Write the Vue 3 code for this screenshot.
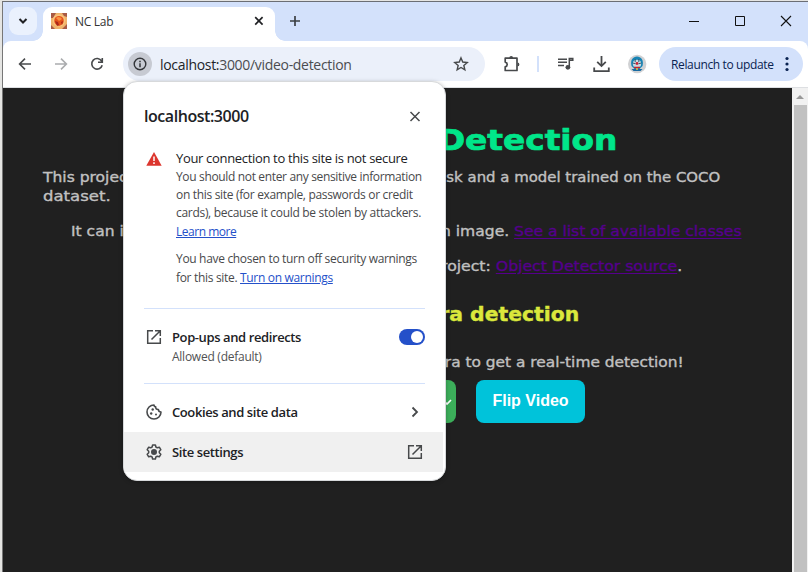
<script setup>
const menuRows = [
  { label: 'Cookies and site data', icon: 'cookie', trail: 'chevron' },
  { label: 'Site settings', icon: 'gear', trail: 'open', hovered: true },
]
</script>

<template>
  <div class="desktop">
    <div class="window">
      <header class="tabs">
        <button class="tab-search"><svg width="28" height="28" viewBox="0 0 28 28"><path d="m10.5 12 3.5 3.5 3.5-3.5" fill="none" stroke="#202124" stroke-width="2" /></svg></button>
        <div class="tab">
          <svg class="favicon" width="16" height="16" viewBox="0 0 16 16">
            <rect width="16" height="16" fill="#efb36c" />
            <path d="M0 0h5L2 5H0zM11 0h5v4l-3-1zM0 12l4 4H0zM16 11v5h-5z" fill="#a85a45" />
            <circle cx="8" cy="7.5" r="6.2" fill="#f9c47c" />
            <path d="M3.500 6c1-4 8-4 9 0 1 4-1.500 6-4.500 7-3-1-5.500-3-4.500-7z" fill="#e4521c" />
            <path d="M5 5c2-2 5-1 6 1L8 8z" fill="#fa9341" />
            <path d="M4 8l3 1 1 3-2 1zM10 9l2-1-1 4z" fill="#a8271b" />
          </svg>
          <span class="tab-title">NC Lab</span>
          <svg class="tab-close" width="10" height="10" viewBox="0 0 10 10"><path d="m1.2 1.2 7.4 7.4m0-7.4L1.2 8.6" stroke="#202124" stroke-width="1.7" /></svg>
        </div>
        <svg class="new-tab" width="12" height="12" viewBox="0 0 12 12"><path d="M6 1v10M1 6h10" stroke="#3c4043" stroke-width="1.7" /></svg>
        <div class="controls">
          <svg width="12" height="12" viewBox="0 0 12 12"><path d="M1 6.5h10" stroke="#111" /></svg>
          <svg width="12" height="12" viewBox="0 0 12 12"><path d="M1.5 1.5h9v9h-9z" fill="none" stroke="#111" /></svg>
          <svg width="12" height="12" viewBox="0 0 12 12"><path d="m1 1 10 10M11 1 1 11" stroke="#111" stroke-width="1.1" /></svg>
        </div>
      </header>

      <nav class="toolbar">
        <div class="nav-icons">
          <svg width="16" height="16" viewBox="0 0 16 16"><path d="M14 8H3M8 2.6 2.6 8 8 13.4" fill="none" stroke="#47494b" stroke-width="1.6" /></svg>
          <svg width="16" height="16" viewBox="0 0 16 16"><path d="M2 8h11M8 2.6 13.4 8 8 13.4" fill="none" stroke="#aaacae" stroke-width="1.6" /></svg>
          <svg width="16" height="16" viewBox="0 0 16 16"><path d="M12.6 5A5.3 5.3 0 1 0 13.2 9.2M13.3 2v4.2H9" fill="none" stroke="#47494b" stroke-width="1.6" /></svg>
        </div>
        <div class="omnibox">
          <span class="info"><svg width="16" height="16" viewBox="0 0 16 16"><circle cx="8" cy="8" r="5.8" fill="none" stroke="#333539" stroke-width="1.4" /><path d="M8 7.3v4M8 4.7v1.5" stroke="#333539" stroke-width="1.5" /></svg></span>
          <span class="url"><b>localhost:</b>3000/video-detection</span>
          <svg class="star" width="16" height="16" viewBox="0 0 16 16"><path d="m8 1.9 1.75 4.15 4.5.4-3.4 2.95 1 4.4L8 11.5l-3.85 2.3 1-4.4-3.4-2.95 4.5-.4z" fill="none" stroke="#47494b" stroke-width="1.4" /></svg>
        </div>
        <div class="actions">
          <svg width="18" height="18" viewBox="0 0 18 18"><path d="M2.200 3.200H14v12.300H2.200v-3.800q2-.5 2-2.300t-2-2.300z" fill="none" stroke="#47494b" stroke-width="1.700" stroke-linejoin="round" /><path d="M6.300 3a1.900 1.900 0 0 1 3.800 0zM14.500 7.500a1.900 1.900 0 0 1 0 3.800z" fill="#47494b" /></svg>
          <i class="separator"></i>
          <svg width="18" height="16" viewBox="0 0 18 16"><path d="M1 3.200h9M1 6.300h9M1 9.400h6" stroke="#47494b" stroke-width="1.500" /><path d="M12.300 11.300V2.500h3.500v1.800H13" fill="none" stroke="#47494b" stroke-width="1.500" /><circle cx="10.900" cy="11.300" r="2.400" fill="#47494b" /></svg>
          <svg width="18" height="18" viewBox="0 0 18 18"><path d="M8.500 1v10M4.200 6.800l4.300 4.300 4.300-4.300M1.200 12.500v3.600h14.600v-3.600" fill="none" stroke="#47494b" stroke-width="1.800" /></svg>
          <svg width="20" height="20" viewBox="0 0 20 20">
            <circle cx="9.200" cy="10" r="9.200" fill="#d0d1d3" />
            <path d="M3.500 12C2 6 5 2.500 9 2.500S16 6 14.500 12l-3 3h-5z" fill="#1784b5" />
            <ellipse cx="9" cy="9.800" rx="4.200" ry="4" fill="#c9d9e1" />
            <path d="M7.200 5v3M10.800 5v3M4.500 9l3 .7M13.500 9l-3 .7" stroke="#315f76" />
            <circle cx="9" cy="9.500" r="1.400" fill="#ca2437" />
            <path d="M6 13.500h6" stroke="#c32433" stroke-width="1.500" /><path d="M3.500 15h11l-2 2h-7z" fill="#176aa1" />
            <circle cx="9" cy="15" r="1" fill="#f0bd38" />
          </svg>
        </div>
        <button class="relaunch"><span>Relaunch to update</span><svg width="4" height="16" viewBox="0 0 4 16"><g fill="#0a2351"><circle cx="2" cy="2.500" r="1.600" /><circle cx="2" cy="8" r="1.600" /><circle cx="2" cy="13.500" r="1.600" /></g></svg></button>
      </nav>

      <div class="viewport">
        <main class="page">
          <h1><span>Detection</span></h1>
          <div class="line intro"><span>This project</span><span class="tail t1">task and a model trained on the COCO</span></div>
          <div class="line second"><span class="dataset">dataset.</span></div>
          <div class="line classes"><span>It can iden</span><span class="tail t2">in an image. <a>See a list of available classes</a></span></div>
          <div class="line source"><span class="tail t3">project: <a>Object Detector source</a>.</span></div>
          <h2><span>Camera detection</span></h2>
          <div class="line camera"><span class="tail t4">camera to get a real-time detection!</span></div>
          <div class="buttons">
            <button class="choose"><svg width="12" height="10" viewBox="0 0 12 10"><path d="m2 3 4 4 4-4" fill="none" stroke="#fff" stroke-width="1.700" /></svg></button>
            <button class="flip">Flip Video</button>
          </div>
        </main>
        <aside class="scrollbar"><i class="arrow"></i><i class="thumb"></i></aside>
      </div>
    </div>

    <section class="popup">
      <header class="popup-head">
        <strong>localhost:3000</strong>
        <svg width="12" height="12" viewBox="0 0 12 12"><path d="m1.500 1 9 9m0-9-9 9" stroke="#47494b" stroke-width="1.500" /></svg>
      </header>
      <div class="security">
        <svg class="warning" width="16" height="14" viewBox="0 0 16 14"><path d="M8 0 15.700 13.700H.3z" fill="#dc362e" /><path d="M8 4.500V9M8 10.200v1.700" stroke="#fff" stroke-width="1.500" /></svg>
        <div class="copy">
          <div class="secure-title">Your connection to this site is not secure</div>
          <div class="l1">You should not enter any sensitive information</div>
          <div class="l2">on this site (for example, passwords or credit</div>
          <div class="l3">cards), because it could be stolen by attackers.</div>
          <div class="more"><a>Learn more</a></div>
          <div class="l4">You have chosen to turn off security warnings</div>
          <div class="l5">for this site. <a>Turn on warnings</a></div>
        </div>
      </div>
      <div class="permission">
        <svg width="16" height="16" viewBox="0 0 16 16"><path d="M7 1.700H1.700v12.600h12.600V9M9 1.700h5.300V7M14.300 1.700 5.500 10.500" fill="none" stroke="#47494b" stroke-width="1.500" /></svg>
        <div class="permission-text"><strong>Pop-ups and redirects</strong><span>Allowed (default)</span></div>
        <i class="toggle"></i>
      </div>
      <div class="menu">
        <div v-for="row in menuRows" :key="row.label" class="menu-row" :class="{ hovered: row.hovered }">
          <svg v-if="row.icon === 'cookie'" width="16" height="16" viewBox="0 0 16 16"><path d="M8 1A7 7 0 1 0 15 8Q12.500 8 12.400 5.500 9.500 5.700 9.700 2.900 8 2.800 8 1z" fill="none" stroke="#47494b" stroke-width="1.600" stroke-linejoin="round" /><g fill="#47494b"><circle cx="6.700" cy="5.500" r="1.200" /><circle cx="5.200" cy="9.500" r="1.200" /><circle cx="10" cy="10.500" r="1" /></g></svg>
          <svg v-else width="16" height="16" viewBox="0 0 16 16"><path d="M6.600 1h2.800l.5 2 1.400.8 2-.6 1.500 2.500L13.300 7.200v1.600l1.500 1.500-1.500 2.500-2-.6-1.400.8-.5 2H6.600l-.5-2-1.400-.8-2 .6-1.500-2.500 1.500-1.500V7.200L1.200 5.700l1.500-2.500 2 .6 1.400-.8z" fill="none" stroke="#47494b" stroke-width="1.500" stroke-linejoin="round" /><circle cx="8" cy="8" r="3" fill="#47494b" /></svg>
          <strong :class="row.icon">{{ row.label }}</strong>
          <svg v-if="row.trail === 'chevron'" width="16" height="16" viewBox="0 0 16 16"><path d="m5.500 3.500 4.500 4.500-4.500 4.500" fill="none" stroke="#47494b" stroke-width="1.800" /></svg>
          <svg v-else width="16" height="16" viewBox="0 0 16 16"><path d="M7 1.700H1.700v12.600h12.600V9M9 1.700h5.300V7M14.300 1.700 5.500 10.500" fill="none" stroke="#47494b" stroke-width="1.500" /></svg>
        </div>
      </div>
    </section>
  </div>
</template>

<style>
body { margin: 0; overflow: hidden; }
</style>
<style scoped>
* { box-sizing: border-box; }
svg { display: block; flex: none; }
button { border: 0; padding: 0; font: inherit; }
.desktop { width: 808px; height: 572px; position: relative; overflow: hidden; background: #e5e5e3; padding: 1px 0 0 2px; font-family: "Open Sans", sans-serif; }
.window { height: 571px; border-left: 1px solid #777; border-top: 1px solid #6b6e74; background: #d3e1fb; }
.tabs { height: 39px; display: flex; align-items: center; }
.tab-search { width: 28px; height: 28px; margin: -2px 0 0 6px; border-radius: 9px; background: #eaf1fd; }
.tab { position: relative; width: 232px; height: 34px; align-self: flex-end; margin-left: 6px; background: #fff; border-radius: 9px 9px 0 0; display: flex; align-items: center; padding: 0 11px 6px 8px; }
.tab::before, .tab::after { content: ""; position: absolute; bottom: 0; width: 10px; height: 10px; }
.tab::before { left: -10px; background: radial-gradient(circle at 0 0, transparent 9.500px, #fff 10px); }
.tab::after { right: -10px; background: radial-gradient(circle at 100% 0, transparent 9.500px, #fff 10px); }
.tab-title { font-size: 12px; margin-left: 8px; color: #333; letter-spacing: -.3px; }
.tab-close { margin-left: auto; }
.new-tab { margin: -2px 0 0 14px; }
.controls { display: flex; gap: 34px; margin: -1px 16px 0 auto; }
.toolbar { height: 47px; background: #fff; border-radius: 8px 8px 0 0; border-bottom: 1px solid #dddfe2; display: flex; align-items: center; padding-right: 5px; }
.nav-icons { display: flex; gap: 20px; padding-left: 14px; width: 120px; }
.omnibox { width: 362px; height: 34px; border-radius: 17px; background: #ebf0fa; display: flex; align-items: center; padding: 0 16px 0 5px; }
.info { width: 24px; height: 24px; border-radius: 50%; background: #c7cad2; display: grid; place-items: center; }
.url { margin-left: 8px; font-size: 14px; letter-spacing: -.31px; color: #4a4c50; white-space: nowrap; }
.url b { font-weight: 400; color: #222428; }
.star { margin-left: auto; }
.actions { display: flex; align-items: center; padding-left: 18px; }
.separator { width: 2px; height: 16px; background: #d3e1fb; margin: 0 18px 0 16px; }
.actions svg:nth-of-type(3) { margin: 0 17px 0 18px; }
.relaunch { margin-left: auto; width: 144px; height: 34px; border-radius: 17px; background: #d3e1fb; color: #0a2351; display: flex; align-items: center; justify-content: space-between; padding: 0 14px 0 12px; font-size: 12px; letter-spacing: -.36px; white-space: nowrap; }
.viewport { height: 484px; display: flex; }
.page { width: 789px; background: #202020; color: #c1c1c1; font-family: "DejaVu Sans", sans-serif; overflow: hidden; }
h1, h2 { margin: 0; display: flex; justify-content: flex-end; white-space: nowrap; }
h1 { height: 80px; padding: 33px 175px 0 0; color: #00e68a; font-size: 28px; line-height: 40px; }
h1 span { transform: scaleX(1.170); transform-origin: right; -webkit-text-stroke: .7px #00e68a; }
.line { height: 19px; display: flex; line-height: 19px; font-size: 14px; padding-left: 40px; white-space: nowrap; -webkit-text-stroke: .35px currentColor; }
.line > span { transform: scaleX(1.110); transform-origin: left; }
.line > .dataset { transform: scaleX(1.180); }
.line > .tail { margin-left: auto; transform: scaleX(1.110); transform-origin: right; }
.line > .t1 { margin-right: 72px; transform: scaleX(1.065); }
.classes { margin-top: 16px; padding-left: 68px; }
.line > .t2 { margin-right: 51px; }
.source { margin-top: 16px; }
.line > .t3 { margin-right: 110px; transform: scaleX(1.120); }
.line a { color: #55008c; text-decoration: underline; text-underline-offset: 2px; }
h2 { margin-top: 24px; height: 30px; padding-right: 213px; color: #dbe83c; font-size: 19px; line-height: 29px; }
h2 span { transform: scaleX(1.070); transform-origin: right; -webkit-text-stroke: .4px #dbe83c; }
.camera { margin-top: 23px; height: 20px; }
.line > .t4 { margin-right: 108px; transform: scaleX(1.100); }
.buttons { display: flex; gap: 20px; margin: 7px 0 0 333px; }
.choose { width: 120px; height: 43px; border-radius: 8px; background: #3cae5a; display: flex; align-items: center; justify-content: flex-end; padding-right: 3px; }
.flip { width: 109px; height: 43px; border-radius: 8px; background: #00c3da; color: #fff; font: bold 16px "Liberation Sans", sans-serif; padding-bottom: 2px; }
.scrollbar { width: 16px; background: #f1f1f1; display: flex; flex-direction: column; align-items: center; padding-top: 7px; }
.arrow { border: 4px solid transparent; border-top: 0; border-bottom-color: #999; height: 4px; }
.thumb { width: 13px; margin-top: 6px; flex: 1; background: #c1c1c1; }
.popup { position: absolute; left: 123px; top: 81px; width: 323px; height: 400px; background: #fff; border: 1px solid #d7d9db; border-radius: 14px; box-shadow: 0 1px 4px #0004; overflow: hidden; color: #202124; }
.popup-head { display: flex; height: 54px; padding: 15px 24px 0 20px; align-items: center; justify-content: space-between; }
.popup-head strong { font-size: 16px; font-weight: 600; letter-spacing: -.45px; }
.security { height: 173px; margin: 0 20px; border-bottom: 1px solid #d3e1fb; padding: 13px 0 0 2px; display: flex; gap: 14px; }
.warning { margin-top: 3px; }
.copy { font-size: 12px; line-height: 18px; color: #48494b; white-space: nowrap; letter-spacing: -.32px; }
.l1 { letter-spacing: -.345px; }
.l3 { letter-spacing: -.3px; }
.secure-title { height: 19px; line-height: 19px; color: #202124; font-size: 13px; letter-spacing: -.33px; }
.more { height: 27px; line-height: 20px; letter-spacing: -.48px; }
.l4, .l5 { height: 19px; line-height: 19px; }
.copy a { color: #2450c9; text-decoration: underline; }
.permission { height: 75px; margin: 0 20px; border-bottom: 1px solid #d3e1fb; display: flex; padding: 20px 0 0 2px; }
.permission-text { margin: -1px 0 0 10px; display: flex; flex-direction: column; }
strong { font-size: 13px; line-height: 19px; font-weight: 600; letter-spacing: -.4px; }
.permission-text span { font-size: 12px; line-height: 19px; letter-spacing: -.25px; color: #505153; }
.toggle { width: 26px; height: 16px; border-radius: 8px; background: #2450c9; margin-left: auto; padding: 2px; display: flex; justify-content: flex-end; }
.toggle::after { content: ""; width: 12px; height: 12px; border-radius: 50%; background: #fff; }
.menu { padding-top: 8px; }
.menu-row { height: 40px; width: 319px; display: flex; align-items: center; padding: 0 20px 0 22px; }
.menu-row strong { margin: 0 auto 0 10px; }
.hovered { background: #f0f0f0; }
</style>
